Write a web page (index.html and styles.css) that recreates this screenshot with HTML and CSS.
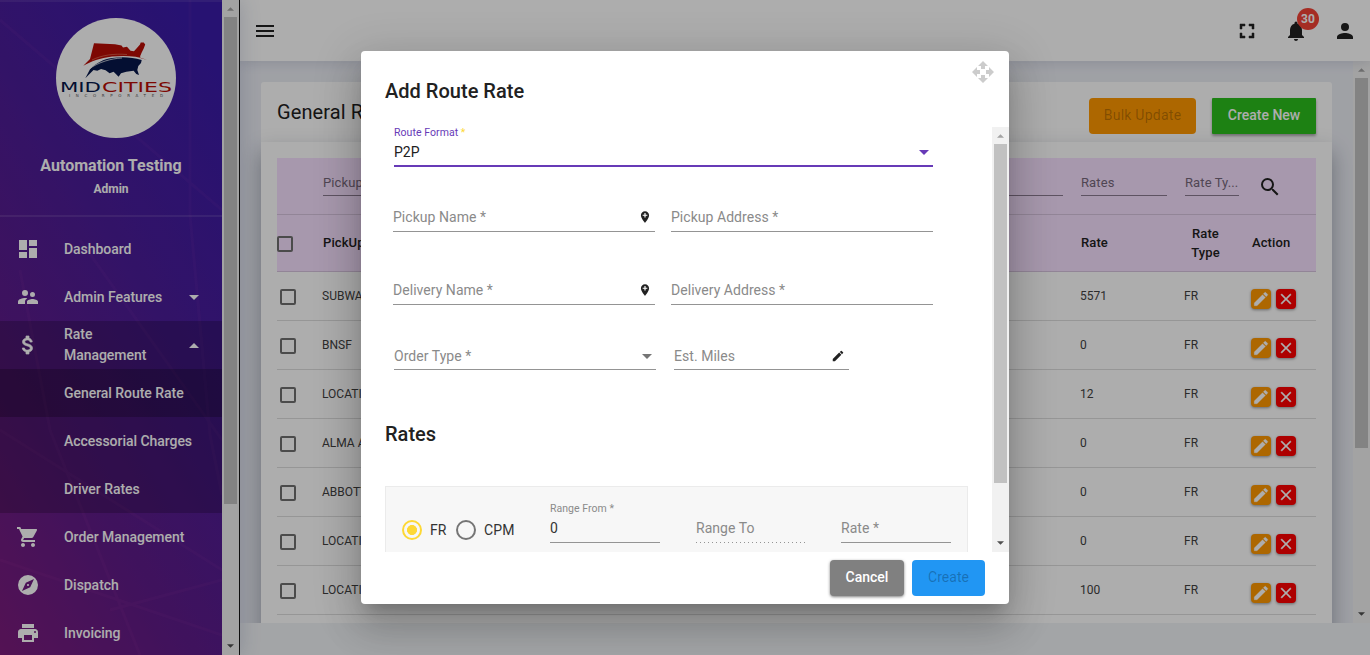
FILE: index.html
```html
<!DOCTYPE html>
<html lang="en">
<head>
<meta charset="utf-8">
<title>General Route Rate</title>
<link rel="stylesheet" href="styles.css">
</head>
<body>
<svg class="sprite" width="0" height="0">
  <symbol id="i-pencil" viewBox="0 0 24 24"><path d="M3 17.25V21h3.75L17.81 9.94l-3.75-3.75L3 17.25zM20.71 7.04a1 1 0 0 0 0-1.41l-2.34-2.34a1 1 0 0 0-1.41 0l-1.83 1.83 3.75 3.75 1.83-1.83z"/></symbol>
  <symbol id="i-close" viewBox="0 0 24 24"><path d="M19 6.41L17.59 5 12 10.59 6.41 5 5 6.41 10.59 12 5 17.59 6.41 19 12 13.41 17.59 19 19 17.59 13.41 12z"/></symbol>
  <symbol id="i-down" viewBox="0 0 10 5"><path d="M0 0h10L5 5z"/></symbol>
  <symbol id="i-up" viewBox="0 0 10 5"><path d="M0 5h10L5 0z"/></symbol>
  <symbol id="i-pin" viewBox="0 0 24 24"><path d="M12 2C8.14 2 5 5.14 5 9c0 5.25 7 13 7 13s7-7.75 7-13c0-3.86-3.14-7-7-7zm4 8h-3v3h-2v-3H8V8h3V5h2v3h3v2z"/></symbol>
</svg>

<div class="app">
  <aside class="sidebar">
    <div class="side-content">
      <svg class="side-rays" viewBox="0 0 222 655" preserveAspectRatio="none"><path d="M0 20l222 190M0 430l222 140M0 560l222 75M20 270l30 160 90 225M190 0v215l20 220 12 60M80 240l142 200M110 610l112-30"/></svg>
      <div class="profile">
        <svg class="logo" viewBox="0 0 120 120">
          <circle cx="60" cy="60" r="60" fill="#fff"/>
          <path fill="#b80c05" d="M38 25.300L59 26.300l6.500 1.200 1.500 2 4-.7 3.500 4 3.500.5 2.700-3 3.300-3.800.7-2 3 0 1.500 2-1.500 4-2 4-1.500 3.500 0 2L91.300 42C80 37.500 68 37.500 56 38.500 44 40 35 43.500 27.300 47.700L34 41z"/>
          <path fill="#06174a" d="M29.300 60.300L34 51.300C40 45 48 41 56 40c10-1.500 20-1 29.700 2l-.7 3-2.700 3-1 4 1.700 5-2.700-1-2.700-3.300-7.300 1-5.300 1.600-2.400 3.400-5-5-4 1.600-4-3-4.500-1.300-3.800 1.700-3.800-.7z"/>
          <path d="M33 51C43 44 55 40.500 66 40" fill="none" stroke="#fff" stroke-width=".7"/>
          <path d="M36 42C46 37 58 35.500 71 36.500" fill="none" stroke="#e88468" stroke-width=".6"/>
          <text x="4" y="73.500" class="logo-mid" textLength="41" lengthAdjust="spacingAndGlyphs">MID</text>
          <text x="46" y="73.500" class="logo-cities" textLength="70" lengthAdjust="spacingAndGlyphs">CITIES</text>
          <text x="13" y="79" class="logo-inc" textLength="94">INCORPORATED</text>
        </svg>
        <div class="user-name">Automation Testing</div>
        <div class="user-role">Admin</div>
      </div>
      <nav class="nav">
        <a class="nav-item"><svg class="nav-icon" viewBox="0 0 24 24"><path d="M3 13h8V3H3v10zm0 8h8v-6H3v6zm10 0h8V11h-8v10zm0-18v6h8V3h-8z"/></svg><span>Dashboard</span></a>
        <a class="nav-item"><svg class="nav-icon" viewBox="0 0 24 24"><path d="M16.500 12a2.500 2.500 0 1 0 0-5 2.500 2.500 0 0 0 0 5zM9 11a3 3 0 1 0 0-6 3 3 0 0 0 0 6zm7.500 3c-1.830 0-5.500.92-5.500 2.750V19h11v-2.250C22 14.920 18.330 14 16.500 14zM9 13c-2.330 0-7 1.170-7 3.500V19h7v-2.250c0-.85.33-2.340 2.370-3.470C10.500 13.100 9.660 13 9 13z"/></svg><span>Admin Features</span><svg class="nav-caret"><use href="#i-down"/></svg></a>
        <div class="nav-group">
          <a class="nav-item"><svg class="nav-icon" viewBox="0 0 24 24"><path class="bold" d="M11.800 10.900c-2.270-.59-3-1.200-3-2.150 0-1.090 1.010-1.850 2.700-1.850 1.780 0 2.440.85 2.500 2.100h2.210c-.07-1.720-1.120-3.300-3.210-3.810V3h-3v2.160c-1.940.42-3.500 1.680-3.500 3.610 0 2.310 1.910 3.460 4.700 4.130 2.500.6 3 1.480 3 2.410 0 .69-.49 1.790-2.700 1.790-2.060 0-2.870-.92-2.980-2.100h-2.200c.12 2.190 1.760 3.420 3.680 3.830V21h3v-2.150c1.950-.37 3.500-1.500 3.500-3.550 0-2.840-2.430-3.810-4.700-4.400z"/></svg><span class="two-line">Rate Management</span><svg class="nav-caret"><use href="#i-up"/></svg></a>
          <a class="nav-item sub active"><span>General Route Rate</span></a>
          <a class="nav-item sub"><span>Accessorial Charges</span></a>
          <a class="nav-item sub"><span>Driver Rates</span></a>
        </div>
        <a class="nav-item"><svg class="nav-icon" viewBox="0 0 24 24"><path d="M7 18c-1.100 0-1.990.9-1.990 2S5.900 22 7 22s2-.9 2-2-.9-2-2-2zM1 2v2h2l3.600 7.590-1.350 2.450c-.16.28-.25.610-.25.960 0 1.100.9 2 2 2h12v-2H7.420c-.14 0-.25-.11-.25-.25l.03-.12.9-1.630h7.450c.75 0 1.410-.41 1.750-1.030l3.580-6.490A1 1 0 0 0 20 4H5.210l-.94-2H1zm16 16c-1.100 0-1.990.9-1.990 2s.89 2 1.990 2 2-.9 2-2-.9-2-2-2z"/></svg><span>Order Management</span></a>
        <a class="nav-item"><svg class="nav-icon" viewBox="0 0 24 24"><path d="M12 10.900a1.100 1.100 0 1 0 0 2.200 1.100 1.100 0 0 0 0-2.200zM12 2a10 10 0 1 0 0 20 10 10 0 0 0 0-20zm2.190 12.190L6 18l3.810-8.190L18 6l-3.810 8.190z"/></svg><span>Dispatch</span></a>
        <a class="nav-item"><svg class="nav-icon" viewBox="0 0 24 24"><path d="M19 8H5c-1.660 0-3 1.340-3 3v6h4v4h12v-4h4v-6c0-1.660-1.340-3-3-3zm-3 11H8v-5h8v5zm3-7a1 1 0 1 1 0-2 1 1 0 0 1 0 2zm-1-9H6v4h12V3z"/></svg><span>Invoicing</span></a>
      </nav>
    </div>
    <div class="scrollbar"><svg class="sb-arrow off"><use href="#i-up"/></svg><div class="sb-thumb side-thumb"></div><svg class="sb-arrow end"><use href="#i-down"/></svg></div>
  </aside>

  <div class="main">
    <header class="topbar">
      <svg class="icon" viewBox="0 0 24 24"><path d="M3 18h18v-2H3v2zm0-5h18v-2H3v2zm0-7v2h18V6H3z"/></svg>
      <div class="top-actions">
        <svg class="icon" viewBox="0 0 24 24"><path class="bold" d="M7 14H5v5h5v-2H7v-3zm-2-4h2V7h3V5H5v5zm12 7h-3v2h5v-5h-2v3zM14 5v2h3v3h2V5h-5z"/></svg>
        <div class="bell"><svg class="icon" viewBox="0 0 24 24"><path d="M12 22c1.100 0 2-.9 2-2h-4c0 1.100.89 2 2 2zm6-6v-5c0-3.070-1.640-5.640-4.500-6.320V4a1.500 1.500 0 0 0-3 0v.68C7.630 5.360 6 7.920 6 11v5l-2 2v1h16v-1l-2-2z"/></svg><span class="badge">30</span></div>
        <svg class="icon" viewBox="0 0 24 24"><path d="M12 12a4 4 0 1 0 0-8 4 4 0 0 0 0 8zm0 2c-2.670 0-8 1.340-8 4v2h16v-2c0-2.660-5.330-4-8-4z"/></svg>
      </div>
    </header>
    <div class="viewport">
      <div class="page">
        <div class="card-head">
          <h2>General Route Rate</h2>
          <button class="btn bulk">Bulk Update</button>
          <button class="btn create-new">Create New</button>
        </div>
        <div class="card-body">
          <div class="grid filters">
            <span></span>
            <div class="filter wide">Pickup</div>
            <div class="filter rates">Rates</div>
            <div class="filter type">Rate Ty...</div>
            <svg class="search" viewBox="0 0 24 24"><path d="M15.500 14h-.79l-.28-.27A6.470 6.470 0 0 0 16 9.500 6.500 6.500 0 1 0 9.500 16c1.610 0 3.090-.59 4.230-1.570l.27.28v.79l5 4.990L20.490 19l-4.990-5zm-6 0a4.500 4.500 0 1 1 0-9 4.500 4.500 0 0 1 0 9z"/></svg>
          </div>
          <div class="grid head">
            <span class="check"></span><span>PickUp</span><span>Rate</span><span class="type-head">Rate<br>Type</span><span class="action-head">Action</span>
          </div>
          <div class="grid row"><span class="check"></span><span>SUBWAY</span><span>5571</span><span>FR</span><div class="acts"><i class="act edit"><svg><use href="#i-pencil"/></svg></i><i class="act del"><svg><use href="#i-close"/></svg></i></div></div>
          <div class="grid row"><span class="check"></span><span>BNSF</span><span>0</span><span>FR</span><div class="acts"><i class="act edit"><svg><use href="#i-pencil"/></svg></i><i class="act del"><svg><use href="#i-close"/></svg></i></div></div>
          <div class="grid row"><span class="check"></span><span>LOCATION</span><span>12</span><span>FR</span><div class="acts"><i class="act edit"><svg><use href="#i-pencil"/></svg></i><i class="act del"><svg><use href="#i-close"/></svg></i></div></div>
          <div class="grid row"><span class="check"></span><span>ALMA A</span><span>0</span><span>FR</span><div class="acts"><i class="act edit"><svg><use href="#i-pencil"/></svg></i><i class="act del"><svg><use href="#i-close"/></svg></i></div></div>
          <div class="grid row"><span class="check"></span><span>ABBOTT</span><span>0</span><span>FR</span><div class="acts"><i class="act edit"><svg><use href="#i-pencil"/></svg></i><i class="act del"><svg><use href="#i-close"/></svg></i></div></div>
          <div class="grid row"><span class="check"></span><span>LOCATION</span><span>0</span><span>FR</span><div class="acts"><i class="act edit"><svg><use href="#i-pencil"/></svg></i><i class="act del"><svg><use href="#i-close"/></svg></i></div></div>
          <div class="grid row"><span class="check"></span><span>LOCATION</span><span>100</span><span>FR</span><div class="acts"><i class="act edit"><svg><use href="#i-pencil"/></svg></i><i class="act del"><svg><use href="#i-close"/></svg></i></div></div>
        </div>
      </div>
      <div class="scrollbar"><svg class="sb-arrow off"><use href="#i-up"/></svg><div class="sb-thumb page-thumb"></div><svg class="sb-arrow end"><use href="#i-down"/></svg></div>
    </div>
  </div>
</div>

<div class="overlay">
  <div class="dialog">
    <div class="dialog-head">
      <h3>Add Route Rate</h3>
      <svg class="move" viewBox="0 0 24 24"><path d="M10 9h4V6h3l-5-5-5 5h3v3zm-1 1H6V7l-5 5 5 5v-3h3v-4zm14 2l-5-5v3h-3v4h3v3l5-5zm-9 3h-4v3H7l5 5 5-5h-3v-3z"/></svg>
    </div>
    <div class="dialog-mid">
      <div class="dialog-scroll">
        <div class="focused"><label>Route Format <b>*</b></label><div class="value">P2P<svg class="caret"><use href="#i-down"/></svg></div></div>
        <div class="pair r1"><div class="field">Pickup Name *<svg class="pin"><use href="#i-pin"/></svg></div><div class="field">Pickup Address *</div></div>
        <div class="pair r2"><div class="field">Delivery Name *<svg class="pin"><use href="#i-pin"/></svg></div><div class="field">Delivery Address *</div></div>
        <div class="pair r3"><div class="field order">Order Type *<svg class="caret"><use href="#i-down"/></svg></div><div class="field miles">Est. Miles<svg class="edit-miles"><use href="#i-pencil"/></svg></div></div>
        <h3 class="rates-title">Rates</h3>
        <div class="rate-box">
          <span class="radio on"></span><span class="radio-label fr">FR</span><span class="radio"></span><span class="radio-label cpm">CPM</span>
          <div class="small-field"><label>Range From *</label><div class="line dark">0</div></div>
          <div class="small-field"><div class="line dotted">Range To</div></div>
          <div class="small-field last"><div class="line">Rate *</div></div>
        </div>
      </div>
      <div class="scrollbar"><svg class="sb-arrow off"><use href="#i-up"/></svg><div class="sb-thumb dialog-thumb"></div><svg class="sb-arrow end"><use href="#i-down"/></svg></div>
    </div>
    <div class="dialog-foot"><button class="btn cancel">Cancel</button><button class="btn create">Create</button></div>
  </div>
</div>
</body>
</html>
```

FILE: styles.css
```css
* { box-sizing: border-box; }
body { margin: 0; height: 655px; overflow: hidden; font-family: Roboto, "Liberation Sans", sans-serif; font-size: 14px; color: #212121; }
h2, h3 { margin: 0; }
button { font-family: inherit; border: 0; padding: 0; }
.sprite { position: absolute; }
.app { display: flex; height: 655px; }

/* sidebar */
.sidebar { display: flex; width: 240px; flex: none; background: #161616; box-shadow: 0 0 20px rgba(40, 60, 120, .2); z-index: 2; }
.side-content { position: relative; width: 222px; overflow: hidden; color: #fff; background: linear-gradient(58deg, #7c1b7c 0%, #601b88 28%, #4c1c98 58%, #3a1ba8 92%); }
.side-rays { position: absolute; left: 0; top: 0; width: 222px; height: 655px; fill: none; stroke: rgba(255, 110, 210, .045); stroke-width: 3; }
.profile { position: relative; height: 217px; padding-top: 16px; border-top: 2px solid rgba(255, 255, 255, .08); border-bottom: 2px solid rgba(255, 255, 255, .1); text-align: center; }
.logo { display: block; width: 120px; height: 120px; margin-left: 56px; }
.logo text { font-family: "DejaVu Sans", sans-serif; font-size: 13.500px; }
.logo .logo-mid { fill: #06174a; }
.logo .logo-cities { fill: #b80c05; }
.logo .logo-inc { font-size: 4px; fill: #555; }
.user-name { margin-top: 17px; line-height: 22px; font-size: 16px; font-weight: 700; }
.user-role { margin-top: 4px; line-height: 16px; font-size: 12px; font-weight: 700; }
.nav { position: relative; padding-top: 8px; }
.nav-item { display: flex; align-items: center; height: 48px; padding: 0 23px 0 16px; font-weight: 500; letter-spacing: -.04px; }
.nav-item span { margin-left: 24px; line-height: 21px; white-space: nowrap; }
.nav-item.sub span { margin-left: 48px; }
.nav-item .two-line { width: 100px; white-space: normal; }
.nav-icon { width: 24px; height: 24px; flex: none; fill: #fff; }
.nav-icon .bold { stroke: #fff; stroke-width: .7; }
.nav-caret { width: 10px; height: 5px; margin-left: auto; fill: #fff; }
.nav-group { background: rgba(0, 0, 0, .2); }
.nav-item.active { background: rgba(0, 0, 0, .22); }

/* scrollbars */
.scrollbar { display: flex; flex-direction: column; align-items: center; width: 17px; flex: none; background: #f1f1f1; }
.sb-arrow { width: 7px; height: 4px; margin: 7px 0 6px; flex: none; fill: #505050; }
.sb-arrow.off { fill: #a3a3a3; }
.sb-arrow.end { margin-top: auto; margin-bottom: 7px; }
.sb-thumb { width: 13px; background: #c1c1c1; flex: none; }
.side-thumb { height: 487px; }
.page-thumb { height: 370px; }
.dialog-thumb { height: 339px; }

/* main area */
.main { flex: 1; background: #f1f3f6; }
.topbar { position: relative; z-index: 1; display: flex; justify-content: space-between; align-items: center; height: 61px; padding: 0 13px; background: #fff; box-shadow: 0 1px 12px rgba(40, 50, 100, .16); }
.icon { display: block; width: 24px; height: 24px; fill: #212121; }
.icon .bold { stroke: #212121; stroke-width: .5; }
.top-actions { display: flex; gap: 25px; }
.bell { position: relative; }
.badge { position: absolute; left: 13px; top: -11px; width: 22px; height: 22px; border-radius: 50%; background: #f44336; color: #fff; font-size: 12px; font-weight: 700; line-height: 22px; text-align: center; }
.viewport { display: flex; height: 562px; overflow: hidden; background: #ebedf4; }
.page { flex: 1; padding: 21px 21px 0; }
.card-head { display: flex; align-items: center; height: 60px; padding: 8px 16px 0; background: #fff; border-radius: 3px 3px 0 0; }
.card-head h2 { flex: 1; font-size: 20px; font-weight: 400; line-height: 24px; padding-bottom: 8px; letter-spacing: .1px; }
.btn { height: 36px; border-radius: 4px; font-size: 14px; font-weight: 500; text-align: center; line-height: 34px; }
.btn { display: block; padding-bottom: 2px; }
.bulk { width: 107px; margin-right: 16px; background: #ff9900; color: rgba(0, 0, 0, .26); letter-spacing: .25px; font-weight: 400; }
.create-new { width: 104px; border-radius: 1px; background: #2cbf1d; color: #fff; box-shadow: 0 2px 3px rgba(0, 0, 0, .35); }
.card-body { height: 520px; padding: 16px; background: #fff; box-shadow: 0 10px 20px rgba(30, 40, 60, .38); }
.grid { display: grid; grid-template-columns: 45px 758px 104px 67px 65px; }
.filters { height: 57px; background: #f7e1ff; border-bottom: 1px solid #d8c4df; font-size: 13px; color: #76687b; }
.filter { height: 38px; padding-top: 16px; line-height: 18px; border-bottom: 1px solid #8b7b91; letter-spacing: .1px; white-space: nowrap; }
.filter.wide { width: 740px; margin-left: 1px; }
.filter.rates { width: 86px; margin-left: 1px; }
.filter.type { width: 54px; margin-left: 1px; }
.search { width: 24px; height: 24px; margin: 17px 0 0 7px; fill: #212121; }
.head { height: 57px; align-items: center; background: #f7e1ff; border-bottom: 1px solid #d8c4df; font-size: 13px; font-weight: 500; line-height: 19px; letter-spacing: .1px; padding-bottom: 1px; }
.head span:nth-child(2), .head span:nth-child(3) { padding: 0 0 1px 1px; }
.type-head { width: 43px; text-align: center; }
.action-head { padding: 0 0 1px 1px; }
.check { width: 16px; height: 16px; border: 2px solid #6f6f6f; border-radius: 2px; margin-top: 2px; }
.row { height: 49px; border-bottom: 1px solid #dedede; align-items: center; font-size: 12px; color: #424242; padding-bottom: 1px; }
.row .check { margin: 2px 0 0 3px; }
.acts { display: flex; gap: 5px; padding-top: 7px; }
.act { display: flex; align-items: center; justify-content: center; width: 20px; height: 20px; border-radius: 4px; box-shadow: 0 1px 3px rgba(0, 0, 0, .4); }
.act svg { width: 18px; height: 18px; fill: #fff; stroke: #fff; stroke-width: .4px; }
.edit { background: #ff9900; }
.del { background: #f00; }

/* dialog */
.overlay { position: absolute; inset: 0; z-index: 10; display: flex; justify-content: center; align-items: flex-start; padding-top: 51px; background: rgba(0, 0, 0, .32); }
.dialog { width: 648px; height: 553px; background: #fff; border-radius: 4px; box-shadow: 0 11px 15px -7px rgba(0, 0, 0, .2), 0 24px 38px 3px rgba(0, 0, 0, .14), 0 9px 46px 8px rgba(0, 0, 0, .12); }
.dialog-head { display: flex; justify-content: space-between; height: 76px; padding: 9px 14px 0 24px; }
.dialog-head h3, .rates-title { font-size: 20px; font-weight: 500; line-height: 24px; letter-spacing: .02px; }
.dialog-head h3 { padding-top: 19px; }
.move { width: 24px; height: 24px; fill: #ccc; }
.dialog-mid { display: flex; height: 425px; overflow: hidden; }
.dialog-scroll { flex: 1; padding-left: 24px; color: #8a8a8a; }
.focused { width: 539px; height: 40px; margin-left: 9px; border-bottom: 2px solid #673ab7; color: #212121; }
.focused label { display: block; height: 10px; line-height: 11px; font-size: 10.500px; letter-spacing: .06px; color: #673ab7; }
.focused b { font-weight: 400; color: #fdd835; }
.focused .value { display: flex; justify-content: space-between; align-items: center; padding: 0 4px 0 0; margin-top: 6px; line-height: 18px; }
.caret { width: 10px; height: 5px; fill: #757575; }
.focused .caret { fill: #673ab7; }
.pair { display: flex; gap: 16px; padding-left: 8px; align-items: flex-end; }
.r1, .r3 { height: 65px; }
.r2 { height: 73px; }
.field { display: flex; justify-content: space-between; align-items: center; width: 262px; height: 24px; padding-bottom: 5px; border-bottom: 1px solid #949494; line-height: 18px; letter-spacing: .04px; }
.r3 { gap: 18px; padding-left: 9px; }
.r3 .field { height: 23px; padding-bottom: 4px; }
.order .caret { margin-right: 4px; }
.field.miles { width: 175px; }
.pin { width: 14px; height: 14px; margin-right: 3px; fill: #212121; }
.edit-miles { width: 14px; height: 14px; margin-right: 4px; fill: #212121; }
.rates-title { margin: 52px 0 40px; color: #212121; }
.rate-box { display: flex; width: 583px; height: 90px; padding: 14px 0 0 16px; background: #f7f7f7; border: 1px solid #ebebeb; }
.radio { width: 20px; height: 20px; flex: none; margin-top: 19px; border: 2px solid #757575; border-radius: 50%; }
.radio.on { border-color: #fdd835; background: radial-gradient(circle, #fdd835 0 4.700px, transparent 5.300px); }
.radio-label { flex: none; margin: 20px 0 0 8px; line-height: 18px; color: #333; letter-spacing: .1px; }
.fr { width: 26px; }
.cpm { width: 66px; }
.small-field { display: flex; flex: none; flex-direction: column; justify-content: flex-end; width: 110px; height: 42px; margin-right: 36px; letter-spacing: .04px; }
.small-field.last { margin-left: -1px; margin-right: 0; }
.small-field label { height: 14px; margin-bottom: 3px; line-height: 14px; font-size: 10.500px; }
.line { height: 24px; line-height: 18px; border-bottom: 1px solid #949494; }
.line.dark { color: #333; }
.line.dotted { border-bottom: 0; background: repeating-linear-gradient(90deg, #949494 0 1px, transparent 1px 4px) 0 100% / 100% 1px no-repeat; }
.dialog-foot { display: flex; justify-content: flex-end; gap: 8px; padding: 8px 24px 0 0; }
.cancel { width: 74px; background: #808080; color: #fff; box-shadow: 0 1px 3px rgba(0, 0, 0, .5); }
.create { width: 73px; background: #2196f3; color: rgba(0, 0, 0, .26); font-weight: 400; }
```
